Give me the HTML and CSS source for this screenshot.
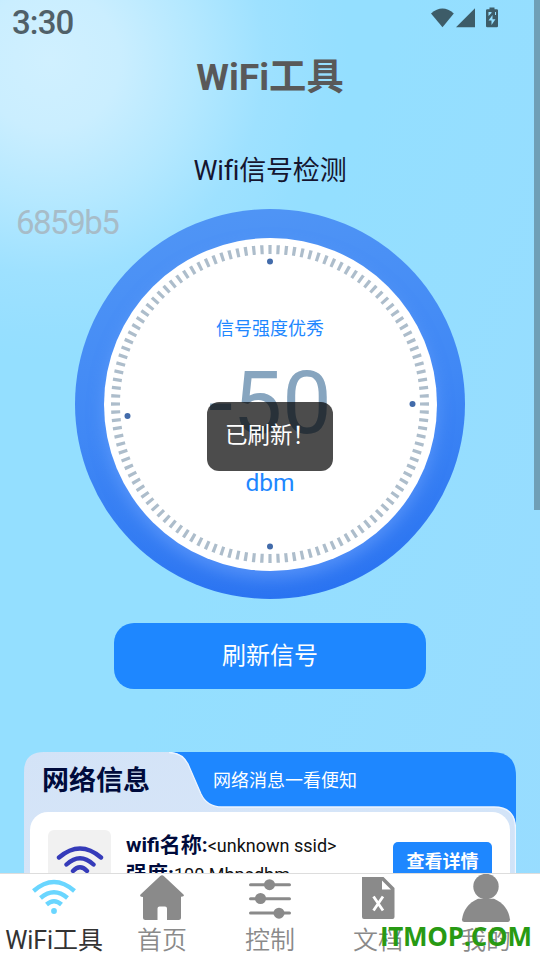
FILE: index.html
```html
<!DOCTYPE html>
<html lang="zh-CN">
<head>
<meta charset="utf-8">
<title>WiFi工具</title>
<link rel="stylesheet" href="styles.css">
</head>
<body>
<div class="screen">
  <header class="status">
    <span class="clock">3:30</span>
    <svg class="status-icons" width="70" height="22" viewBox="0 0 70 22">
      <path d="M1 6.400Q12.500-3.400 23.800 6.400L12.500 20.200Z"/>
      <path d="M26 20.200L45 1.200V20.200Z"/>
      <path d="M59.500.5h5v1.700h2.300q1.200 0 1.200 1.200v15.600q0 1.200-1.200 1.200h-9.600q-1.200 0-1.200-1.200V3.400q0-1.200 1.200-1.200h2.300z"/>
      <path class="bolt" d="M62.500 8v4.200h3L61.500 18v-4.500h-3zM58.500 5h3v1l-3 3zM65 5h1v3h-1z"/>
    </svg>
  </header>
  <h1 class="title">WiFi工具</h1>
  <h2 class="subtitle">Wifi信号检测</h2>
  <span class="code">6859b5</span>
  <section class="gauge">
    <div class="dial">
      <svg class="scale" viewBox="0 0 334 334">
        <circle class="ticks" cx="167" cy="167" r="154.500" pathLength="1200"/>
        <circle cx="167" cy="24.500" r="3"/>
        <circle cx="309.500" cy="167" r="3"/>
        <circle cx="167" cy="309.500" r="3"/>
        <circle cx="24.500" cy="179" r="3"/>
      </svg>
      <div class="quality">信号强度优秀</div>
      <div class="value">-50</div>
      <div class="unit">dbm</div>
    </div>
  </section>
  <button class="refresh">刷新信号</button>
  <section class="network">
    <svg class="network-bg" viewBox="0 0 492 130">
      <defs>
        <linearGradient id="tab" x1="0" y1="0" x2="1" y2="1">
          <stop offset="0" stop-color="#d3e3f7"/><stop offset=".5" stop-color="#d6e5f8"/><stop offset="1" stop-color="#d0e3f8"/>
        </linearGradient>
      </defs>
      <path fill="#1e87ff" d="M20 0H468Q492 0 492 24V130H0V20Z"/>
      <path fill="url(#tab)" d="M0 130V20Q0 0 20 0H145Q158 0 164 12L177 42Q183 55 198 55H470Q492 55 492 77V130Z"/>
      <path fill="none" stroke="#edf5ff" stroke-width="1.300" d="M145 .5Q158 .5 164 12L177 42Q183 55 198 55H470Q491.500 55 491.500 77V130"/>
    </svg>
    <div class="network-head">
      <h3>网络信息</h3>
      <p>网络消息一看便知</p>
    </div>
    <div class="network-card">
      <div class="wifi-box">
        <svg width="50" height="46" viewBox="0 0 50 46">
          <path d="M4 14.500Q25-3.500 46 14.500M11.500 21.500Q25 9 38.500 21.500M18 28Q25 20.500 32 28"/>
        </svg>
      </div>
      <div class="details">
        <p><b>wifi名称:</b>&lt;unknown ssid&gt;</p>
        <p><b>强度:</b>100 Mbpsdbm</p>
      </div>
      <button class="more">查看详情</button>
    </div>
  </section>
  <nav class="tabs">
    <a class="tab active">
      <svg viewBox="0 0 50 50">
        <g fill="none" stroke="#6ad6ff" stroke-width="4.400">
          <path d="M4.500 17Q25-1 45.500 17M11.500 24Q25 12.500 38.500 24M17.500 30.500Q25 24 32.500 30.500"/>
        </g>
        <circle cx="25" cy="37" r="2.900" fill="#6ad6ff"/>
      </svg>
      <span>WiFi工具</span>
    </a>
    <a class="tab">
      <svg viewBox="0 0 50 50">
        <path d="M23 2.200Q25 .2 27 2.200L46.500 20.500Q48 22.500 44 22.800V43.500Q44 46 41.500 46H30V34.500Q30 32.500 28 32.500H22.500Q20.500 32.500 20.500 34.500V46H8.500Q6 46 6 43.500V23Q2 22.500 3.500 20.500Z"/>
      </svg>
      <span>首页</span>
    </a>
    <a class="tab">
      <svg viewBox="0 0 50 50">
        <path fill="none" stroke="#8a8a8a" stroke-width="3" stroke-linecap="round" d="M5.500 10.700H44.500M5.500 24.800H44.500M5.500 39H44.500"/>
        <circle cx="24.500" cy="10.700" r="5.500"/><circle cx="15.500" cy="24.500" r="5.500"/><circle cx="34" cy="39.200" r="5.500"/>
      </svg>
      <span>控制</span>
    </a>
    <a class="tab">
      <svg viewBox="0 0 50 50">
        <path fill-rule="evenodd" d="M9 3H30.500L41.500 14V43Q41.500 45 39.500 45H11Q9 45 9 43ZM29 6.500V15.500H38Z"/>
        <path fill="none" stroke="#fff" stroke-width="2.800" d="M20.500 22.500L30 36.500M30 22.500L20.500 36.500"/>
      </svg>
      <span>文档</span>
    </a>
    <a class="tab">
      <svg viewBox="0 0 50 50">
        <circle cx="25" cy="12.500" r="12.700"/>
        <path d="M17 24.800H33Q47 31 49 45.500Q49 48 46.500 48H3.500Q1 48 1 45.500Q3 31 17 24.800Z"/>
      </svg>
      <span>我的</span>
    </a>
  </nav>
  <div class="toast">已刷新！</div>
  <div class="scrollbar"></div>
  <div class="brand">ITMOP.COM</div>
</div>
</body>
</html>
```

FILE: styles.css
```css
* { box-sizing: border-box; margin: 0; padding: 0; }
body { font-family: Roboto, "Noto Sans CJK SC", sans-serif; }
button { border: 0; font-family: inherit; }

.screen {
  position: relative;
  display: flex;
  flex-direction: column;
  align-items: center;
  width: 540px;
  height: 960px;
  overflow: hidden;
  background: radial-gradient(circle at 50px 60px, #d0f0ff 0, #caeeff 70px, #b4e8ff 145px, #9ee1ff 215px, #96dfff 275px, rgba(150, 223, 255, 0) 300px),
    linear-gradient(110deg, #94dfff 45%, #98dcff 100%);
}

.status { display: flex; justify-content: space-between; width: 100%; height: 46px; padding: 7px 40px 0 12px; }
.clock { font-size: 33px; line-height: 32px; font-weight: 500; letter-spacing: -.9px; color: #506068; }
.status-icons { fill: #3d5c68; }
.status-icons .bolt { fill: #94dfff; }

.title { height: 62px; line-height: 62px; font-size: 37.300px; font-weight: 700; color: #595959; }
.subtitle { height: 101px; padding-top: 43px; line-height: 40px; font-size: 27px; font-weight: 400; letter-spacing: -.2px; color: #15152f; }
.code { position: absolute; left: 16px; top: 204px; line-height: 38px; font-size: 33px; letter-spacing: -1.500px; color: #a7bcc8; }

.gauge {
  flex: none;
  display: grid;
  place-items: center;
  width: 390px;
  height: 390px;
  border-radius: 50%;
  background: linear-gradient(170deg, #5095f5 5%, #4088f5 50%, #2b74f1 93%);
}
.dial {
  position: relative;
  display: flex;
  flex-direction: column;
  align-items: center;
  width: 333px;
  height: 333px;
  padding-top: 78px;
  border-radius: 50%;
  background: #fff;
  box-shadow: 0 8px 16px rgba(120, 170, 255, .5);
}
.scale { position: absolute; left: -.5px; top: -.5px; width: 334px; height: 334px; fill: #426baa; }
.scale .ticks { fill: none; stroke: #adbdcb; stroke-width: 9; stroke-dasharray: 4 6; stroke-dashoffset: 2; }
.quality { height: 26px; line-height: 26px; font-size: 18px; color: #1e87ff; }
.value { height: 121px; line-height: 122px; font-size: 88px; color: #87a5bf; }
.unit { height: 40px; line-height: 40px; font-size: 24.500px; color: #1e87ff; }

.refresh {
  flex: none;
  width: 312px;
  height: 66px;
  margin: 24px 0 63px;
  padding-bottom: 5px;
  border-radius: 20px;
  background: #1e87ff;
  color: #fff;
  font-size: 24px;
}

.network { position: relative; flex: none; width: 492px; height: 121px; overflow: hidden; }
.network-bg { position: absolute; left: 0; top: 0; width: 492px; height: 130px; }
.network-head { position: relative; display: flex; height: 60px; color: #fff; }
.network-head h3 { width: 189px; padding-left: 18px; font-size: 27px; line-height: 58px; color: #000b3c; }
.network-head p { font-size: 18px; line-height: 58px; }
.network-card {
  position: relative;
  display: flex;
  height: 80px;
  margin: 0 6px;
  padding: 18px 18px 0;
  border-radius: 18px 18px 0 0;
  background: #fff;
}
.wifi-box { width: 63px; height: 62px; padding: 13px 0 0 7px; border-radius: 6px; background: #f1f1f1; }
.wifi-box svg { fill: none; stroke: #353bb9; stroke-width: 4.400; stroke-linecap: round; }
.details { flex: 1; padding-left: 15px; font-size: 18px; line-height: 30px; color: #111; white-space: nowrap; }
.details p { height: 29px; }
.details b { font-size: 21px; color: #000b3c; }
.more { align-self: flex-start; width: 99px; height: 38px; margin-top: 12px; padding-bottom: 3px; border-radius: 5px; background: #1e87ff; color: #fff; font-size: 18px; font-weight: 700; }

.tabs { display: flex; flex: none; width: 100%; height: 87px; border-top: 1px solid #ddd; background: #fff; }
.tab { flex: 1; display: flex; flex-direction: column; align-items: center; font-size: 25px; font-weight: 350; line-height: 34px; color: #8a8a8a; white-space: nowrap; }
.tab svg { flex: none; width: 50px; height: 50px; fill: #8a8a8a; }
.tab.active { color: #333; font-weight: 400; letter-spacing: -.1px; }

.toast {
  position: absolute;
  left: 207px;
  top: 402px;
  width: 126px;
  height: 69px;
  padding-left: 18px;
  border-radius: 12px;
  background: rgba(0, 0, 0, .7);
  color: #fff;
  font-size: 22.500px;
  line-height: 67px;
  white-space: nowrap;
}
.scrollbar { position: absolute; right: 0; top: 0; width: 6px; height: 510px; background: #6f9fb6; }
.brand { position: absolute; left: 380px; top: 918px; font: 700 26px/36px "Open Sans", "Noto Sans", sans-serif; letter-spacing: -.3px; color: #289a13; }
```
